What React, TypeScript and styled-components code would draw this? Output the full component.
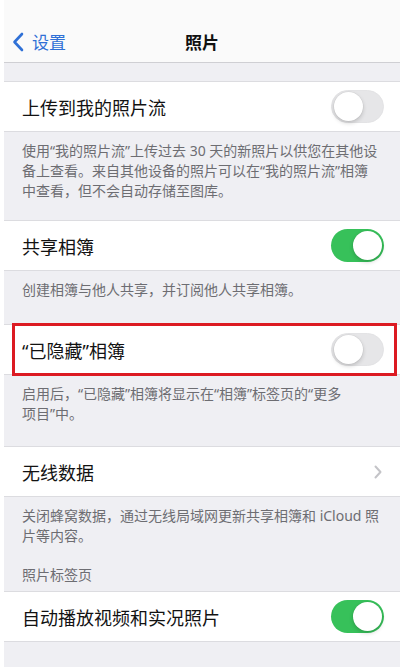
import * as React from "react";
import styled, { createGlobalStyle } from "styled-components";

type TRow = {
  title: string;
  kind: "on" | "off" | "link";
  header?: string;
  footer?: string[];
  gap?: number;
  marked?: boolean;
};

const rows: TRow[] = [
  {
    title: "上传到我的照片流",
    kind: "off",
    gap: 19,
    footer: [
      "使用“我的照片流”上传过去 30 天的新照片以供您在其他设",
      "备上查看。来自其他设备的照片可以在“我的照片流”相簿",
      "中查看，但不会自动存储至图库。"
    ]
  },
  {
    title: "共享相簿",
    kind: "on",
    gap: 24,
    footer: ["创建相簿与他人共享，并订阅他人共享相簿。"]
  },
  {
    title: "“已隐藏”相簿",
    kind: "off",
    marked: true,
    gap: 22,
    footer: ["启用后，“已隐藏”相簿将显示在“相簿”标签页的“更多", "项目”中。"]
  },
  {
    title: "无线数据",
    kind: "link",
    gap: 13,
    footer: ["关闭蜂窝数据，通过无线局域网更新共享相簿和 iCloud 照", "片等内容。"]
  },
  {
    title: "自动播放视频和实况照片",
    kind: "on",
    header: "照片标签页"
  }
];

const GlobalStyle = createGlobalStyle`
  html, body {
    margin: 0;
    padding: 0;
    background: #ffffff;
  }
  body {
    font-family: "Noto Sans", "Noto Sans CJK SC", sans-serif;
    -webkit-font-smoothing: antialiased;
  }
`;

export default function App() {
  return (
    <>
      <GlobalStyle />
      <Page>
        <NavBar>
          <BackButton>
            <svg width="12" height="20" viewBox="0 0 12 20">
              <path
                d="M10 2 L2.5 10 L10 18"
                fill="none"
                stroke="#2f70d6"
                strokeWidth="2.6"
                strokeLinecap="round"
                strokeLinejoin="round"
              />
            </svg>
            <span>设置</span>
          </BackButton>
          <Title>照片</Title>
        </NavBar>
        <Content>
          {rows.map(({ title, kind, header, footer, gap, marked }) => (
            <Section key={title}>
              {header && <SectionHeader>{header}</SectionHeader>}
              <Cell>
                <CellTitle>{title}</CellTitle>
                {kind === "link" ? (
                  <Chevron width="8" height="14" viewBox="0 0 8 14">
                    <path
                      d="M1.5 1.5 L6.5 7 L1.5 12.5"
                      fill="none"
                      stroke="#c4c4c8"
                      strokeWidth="2"
                      strokeLinecap="round"
                      strokeLinejoin="round"
                    />
                  </Chevron>
                ) : (
                  <Toggle $on={kind === "on"}>
                    <Knob />
                  </Toggle>
                )}
                {marked && <Highlight />}
              </Cell>
              {footer && (
                <SectionFooter $gap={gap ?? 20}>
                  {footer.map((line) => (
                    <div key={line}>{line}</div>
                  ))}
                </SectionFooter>
              )}
            </Section>
          ))}
        </Content>
      </Page>
    </>
  );
}

const Page = styled.div`
  margin-left: 4px;
  height: 667px;
  background: #efeff3;
  display: flex;
  flex-direction: column;
  overflow: hidden;
`;

const NavBar = styled.div`
  flex: 0 0 63px;
  box-sizing: border-box;
  padding-top: 20px;
  background: #fafafa;
  border-bottom: 1px solid #cfcfd3;
  position: relative;
  display: flex;
  align-items: center;
  justify-content: center;
`;

const BackButton = styled.div`
  position: absolute;
  left: 8px;
  top: 20px;
  bottom: 0;
  display: flex;
  align-items: center;
  gap: 8px;
  color: #2f70d6;
  font-size: 17px;
  svg {
    margin-top: 1px;
  }
`;

const Title = styled.div`
  font-size: 17px;
  font-weight: 700;
  color: #111111;
`;

const Content = styled.div`
  padding-top: 18px;
  display: flex;
  flex-direction: column;
`;

const Section = styled.div`
  display: flex;
  flex-direction: column;
`;

const SectionHeader = styled.div`
  padding: 6px 18px 6px;
  font-size: 14px;
  line-height: 20px;
  color: #6d6d72;
`;

const Cell = styled.div`
  position: relative;
  height: 51px;
  box-sizing: border-box;
  background: #ffffff;
  border-top: 1px solid #dcdce0;
  border-bottom: 1px solid #dcdce0;
  padding: 0 16px 0 18px;
  display: flex;
  align-items: center;
  justify-content: space-between;
`;

const CellTitle = styled.div`
  font-size: 18px;
  color: #121212;
`;

const Toggle = styled.div<{ $on: boolean }>`
  width: 53px;
  height: 33px;
  box-sizing: border-box;
  border-radius: 17px;
  background: ${({ $on }) => ($on ? "#37c15a" : "#e6e6e8")};
  border: ${({ $on }) => ($on ? "none" : "1.5px solid #e3e3e5")};
  display: flex;
  align-items: center;
  justify-content: ${({ $on }) => ($on ? "flex-end" : "flex-start")};
  padding: 0 2px;
`;

const Knob = styled.div`
  width: 29px;
  height: 29px;
  border-radius: 50%;
  background: #ffffff;
  box-shadow: 0 2px 4px rgba(0, 0, 0, 0.18), 0 0 0 0.5px rgba(0, 0, 0, 0.06);
`;

const Chevron = styled.svg`
  margin-right: 2px;
`;

const Highlight = styled.div`
  position: absolute;
  top: -2px;
  bottom: -2px;
  left: 8px;
  right: 3px;
  border: 3px solid #dc1a22;
  pointer-events: none;
`;

const SectionFooter = styled.div<{ $gap: number }>`
  padding: 9px 18px ${({ $gap }) => $gap}px;
  font-size: 14px;
  line-height: 20px;
  color: #6d6d72;
  white-space: nowrap;
`;
